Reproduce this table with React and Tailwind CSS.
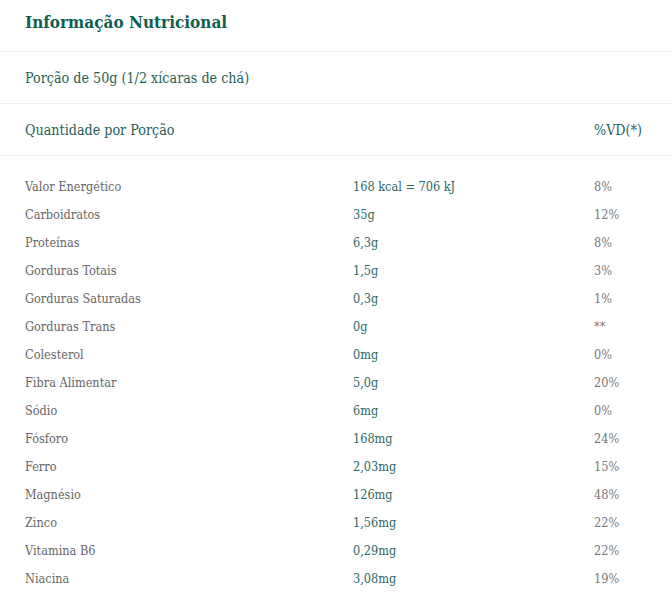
const rows = [
  ['Valor Energético', '168 kcal = 706 kJ', '8%'],
  ['Carboidratos', '35g', '12%'],
  ['Proteínas', '6,3g', '8%'],
  ['Gorduras Totais', '1,5g', '3%'],
  ['Gorduras Saturadas', '0,3g', '1%'],
  ['Gorduras Trans', '0g', '**'],
  ['Colesterol', '0mg', '0%'],
  ['Fibra Alimentar', '5,0g', '20%'],
  ['Sódio', '6mg', '0%'],
  ['Fósforo', '168mg', '24%'],
  ['Ferro', '2,03mg', '15%'],
  ['Magnésio', '126mg', '48%'],
  ['Zinco', '1,56mg', '22%'],
  ['Vitamina B6', '0,29mg', '22%'],
  ['Niacina', '3,08mg', '19%'],
];

export default function App() {
  return (
    <main className="w-[671px] min-h-[602px] bg-white" style={{ fontFamily: '"DejaVu Serif Condensed", "DejaVu Serif", serif' }}>
      <div className="h-[52px] px-[25px] pt-[9px] border-b border-[#eeeeee]">
        <h1 className="text-[17px] leading-[26px] font-bold text-[#0f5e50]">Informação Nutricional</h1>
      </div>
      <div className="h-[52px] px-[25px] pt-[2px] flex items-center border-b border-[#eeeeee]">
        <span className="text-[14.2px] text-[#1f5f55]">Porção de 50g (1/2 xícaras de chá)</span>
      </div>
      <div className="h-[52px] px-[25px] pt-[2px] flex items-center border-b border-[#eeeeee]">
        <span className="text-[14.2px] text-[#1f5f55] flex-1">Quantidade por Porção</span>
        <span className="text-[14.2px] text-[#1f5f55] w-[52px]">%VD(*)</span>
      </div>
      <div className="pt-[17px] px-[25px]">
        {rows.map(([label, value, vd]) => (
          <div key={label} className="h-[28px] flex items-center text-[12.6px]">
            <span className="w-[328px] text-[#666666]">{label}</span>
            <span className="flex-1 text-[#2a6a5f]">{value}</span>
            <span className="w-[52px] text-[#777777]">{vd}</span>
          </div>
        ))}
      </div>
    </main>
  );
}
